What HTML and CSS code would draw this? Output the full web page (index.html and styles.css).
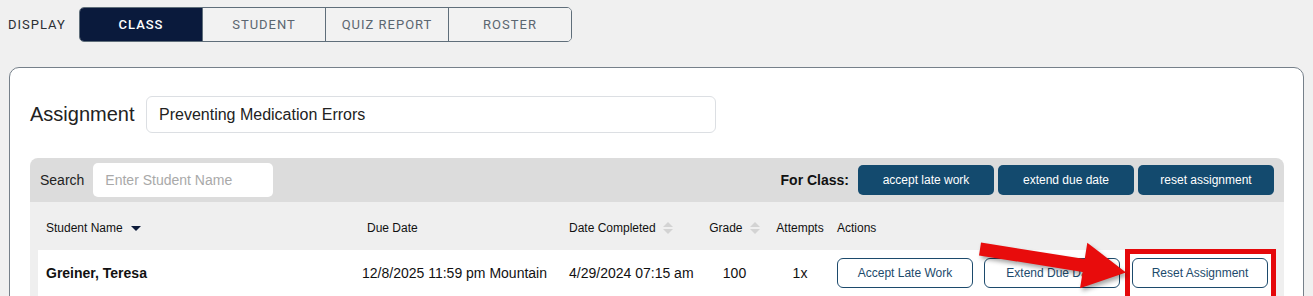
FILE: index.html
```html
<!DOCTYPE html>
<html lang="en">
<head>
    <meta charset="UTF-8">
    <title>Assignment - Class</title>
    <link rel="stylesheet" href="styles.css">
</head>
<body>
    <div class="page">
        <!-- display switch -->
        <div class="display-bar">
            <span class="display-label">DISPLAY</span>
            <div class="tabs">
                <a class="tab active" href="#">CLASS</a>
                <a class="tab" href="#">STUDENT</a>
                <a class="tab" href="#">QUIZ REPORT</a>
                <a class="tab" href="#">ROSTER</a>
            </div>
        </div>

        <div class="card">
            <div class="assignment-row">
                <label class="assignment-label">Assignment</label>
                <div class="assignment-select">Preventing Medication Errors</div>
            </div>

            <div class="toolbar">
                <span class="search-label">Search</span>
                <input class="search-input" type="text" placeholder="Enter Student Name">
                <span class="for-class">For Class:</span>
                <button class="btn-solid">accept late work</button>
                <button class="btn-solid">extend due date</button>
                <button class="btn-solid">reset assignment</button>
            </div>

            <div class="grid-wrap">
                <div class="grid-row head">
                    <div class="c-name">Student Name <span class="caret"></span></div>
                    <div class="c-due">Due Date</div>
                    <div class="c-done">Date Completed <span class="sort"><i class="up"></i><i class="down"></i></span></div>
                    <div class="c-grade">Grade <span class="sort"><i class="up"></i><i class="down"></i></span></div>
                    <div class="c-att">Attempts</div>
                    <div class="c-act">Actions</div>
                </div>
                <div class="grid-row body-row">
                    <div class="c-name strong">Greiner, Teresa</div>
                    <div class="c-due">12/8/2025 11:59 pm Mountain</div>
                    <div class="c-done">4/29/2024 07:15 am</div>
                    <div class="c-grade">100</div>
                    <div class="c-att">1x</div>
                    <div class="c-act actions">
                        <button class="btn-outline">Accept Late Work</button>
                        <button class="btn-outline">Extend Due Date</button>
                        <button class="btn-outline">Reset Assignment</button>
                    </div>
                </div>
            </div>
        </div>

        <!-- annotation overlay -->
        <div class="highlight-box"></div>
        <svg class="arrow" width="1313" height="296" viewBox="0 0 1313 296">
            <polygon points="981,242.6 1084.7,259.1 1087.3,242.8 1126,272.4 1080,288.2 1082.7,271.9 979,255.4" fill="#e80c0c"/>
        </svg>
    </div>
</body>
</html>
```

FILE: styles.css
```css
body {
    margin: 0;
    background-color: #f0f0f0;
    font-family: "Liberation Sans", Arial, sans-serif;
    color: #111;
}
.page {
    position: relative;
    width: 1313px;
    height: 296px;
    overflow: hidden;
}

/* display switch */
.display-bar {
    display: flex;
    align-items: center;
    padding: 7px 0 0 8px;
}
.display-label {
    width: 71px;
    font-family: Roboto, sans-serif;
    font-size: 13px;
    letter-spacing: 1px;
    color: #2b2f33;
}
.tabs {
    display: flex;
    border: 1px solid #5f6e7a;
    border-radius: 5px;
    overflow: hidden;
}
.tab {
    width: 122px;
    height: 33px;
    line-height: 33px;
    text-align: center;
    text-decoration: none;
    font-family: Roboto, sans-serif;
    font-size: 13px;
    letter-spacing: 1px;
    color: #5b6670;
    background: #f2f2f2;
    border-left: 1px solid #5f6e7a;
}
.tab:first-child {
    border-left: none;
}
.tab.active {
    background: #0a1a3c;
    color: #fff;
    font-weight: 500;
}

/* card */
.card {
    margin: 25px 9px 0 9px;
    height: 300px;
    background: #fff;
    border: 1px solid #76808a;
    border-radius: 10px;
    padding: 28px 19px 0 20px;
}
.assignment-row {
    display: flex;
    align-items: center;
    gap: 12px;
}
.assignment-label {
    font-size: 20px;
    color: #222;
    width: 104px;
}
.assignment-select {
    width: 556px;
    height: 35px;
    line-height: 35px;
    padding-left: 12px;
    border: 1px solid #dcdfe3;
    border-radius: 6px;
    font-size: 16px;
    color: #222;
}

/* toolbar */
.toolbar {
    margin-top: 25px;
    height: 44px;
    display: flex;
    align-items: center;
    padding: 0 10px;
    background: #dcdcdc;
    border-radius: 8px 8px 0 0;
}
.search-label {
    font-size: 14px;
    color: #222;
    margin-right: 9px;
}
.search-input {
    width: 180px;
    height: 34px;
    box-sizing: border-box;
    border: none;
    border-radius: 5px;
    padding: 0 12px;
    font-family: inherit;
    font-size: 14px;
    background: #fff;
}
.search-input::placeholder {
    color: #a9a9a9;
}
.for-class {
    margin-left: auto;
    margin-right: 9px;
    font-size: 14px;
    font-weight: bold;
}
.btn-solid {
    width: 136px;
    height: 30px;
    margin-left: 4px;
    border: none;
    border-radius: 5px;
    background: #134a6e;
    color: #fff;
    font-family: inherit;
    font-size: 12px;
}
.for-class + .btn-solid {
    margin-left: 0;
}

/* table */
.grid-wrap {
    background: #efefef;
    padding: 0 8px;
}
.grid-row {
    display: grid;
    grid-template-columns: 316px 207px 137px 73px 58px 1fr;
    align-items: center;
}
.grid-row.head {
    height: 45px;
    padding-top: 3px;
    font-size: 12px;
}
.grid-row.body-row {
    height: 46px;
    background: #fff;
    font-size: 14px;
}
.c-name { padding-left: 8px; }
.c-due { padding-left: 8px; }
.head .c-due { padding-left: 13px; }
.c-done { padding-left: 8px; }
.c-grade, .c-att { text-align: center; }
.c-act { padding-left: 8px; }
.strong { font-weight: bold; }

.caret {
    display: inline-block;
    margin-left: 5px;
    vertical-align: middle;
    border-left: 5px solid transparent;
    border-right: 5px solid transparent;
    border-top: 5px solid #0d1b3a;
}
.sort {
    display: inline-flex;
    flex-direction: column;
    gap: 2px;
    margin-left: 4px;
    vertical-align: middle;
}
.sort i {
    display: block;
    border-left: 5px solid transparent;
    border-right: 5px solid transparent;
}
.sort .up { border-bottom: 5px solid #d3d3d3; }
.sort .down { border-top: 5px solid #d3d3d3; }

.actions {
    display: flex;
    gap: 11px;
}
.btn-outline {
    width: 136px;
    height: 30px;
    background: #fff;
    border: 1px solid #1c4a6c;
    border-radius: 6px;
    color: #1c4a6c;
    font-family: inherit;
    font-size: 12px;
}
.btn-outline:last-child {
    margin-left: 1px;
}

/* red annotation */
.highlight-box {
    position: absolute;
    left: 1125px;
    top: 249px;
    width: 141px;
    height: 60px;
    border: 5px solid #e5080b;
}
.arrow {
    position: absolute;
    left: 0;
    top: 0;
    filter: drop-shadow(2px 3px 2px rgba(0,0,0,0.35));
}
```
